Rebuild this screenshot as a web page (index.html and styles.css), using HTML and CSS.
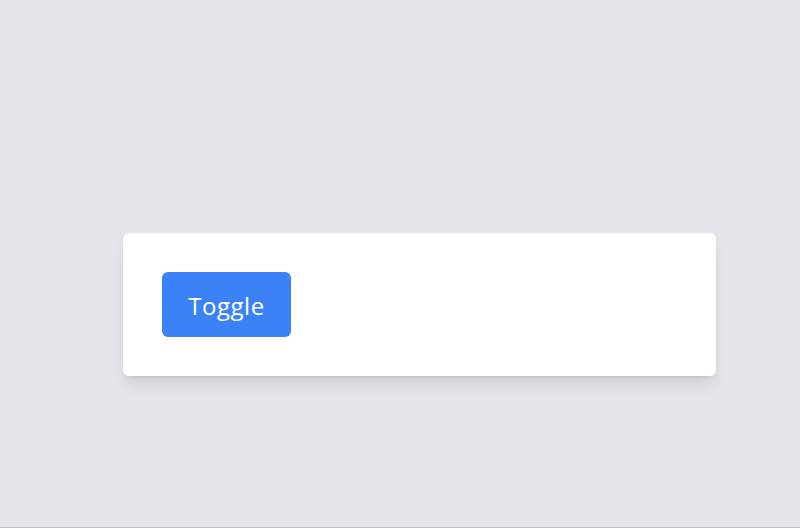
FILE: index.html
```html
<!DOCTYPE html>
<html>
<head>
<meta charset="utf-8">
<link rel="stylesheet" href="styles.css">
</head>
<body>
<div class="page">
  <div class="card">
    <button class="toggle">Toggle</button>
  </div>
</div>
</body>
</html>
```
FILE: styles.css
```css
* { box-sizing: border-box; }
html, body { margin: 0; padding: 0; }
body {
  background: #e5e4ea;
  font-family: "Open Sans", "Noto Sans", sans-serif;
}
.page {
  height: 528px;
  padding: 233px 0 0 123px;
  border-bottom: 1px solid #bdbdc0;
}
.card {
  width: 593px;
  height: 143px;
  background: #ffffff;
  border-radius: 6px;
  padding: 39px;
  box-shadow: 0 10px 15px -3px rgba(0,0,0,0.1), 0 4px 6px -4px rgba(0,0,0,0.1);
}
.toggle {
  display: block;
  width: 129px;
  height: 65px;
  border: none;
  border-radius: 6px;
  background: #3b82f6;
  color: #ffffff;
  font-family: "Open Sans", "Noto Sans", sans-serif;
  font-size: 24px;
  letter-spacing: 0.5px;
  padding: 2px 0 0 0;
}
```
